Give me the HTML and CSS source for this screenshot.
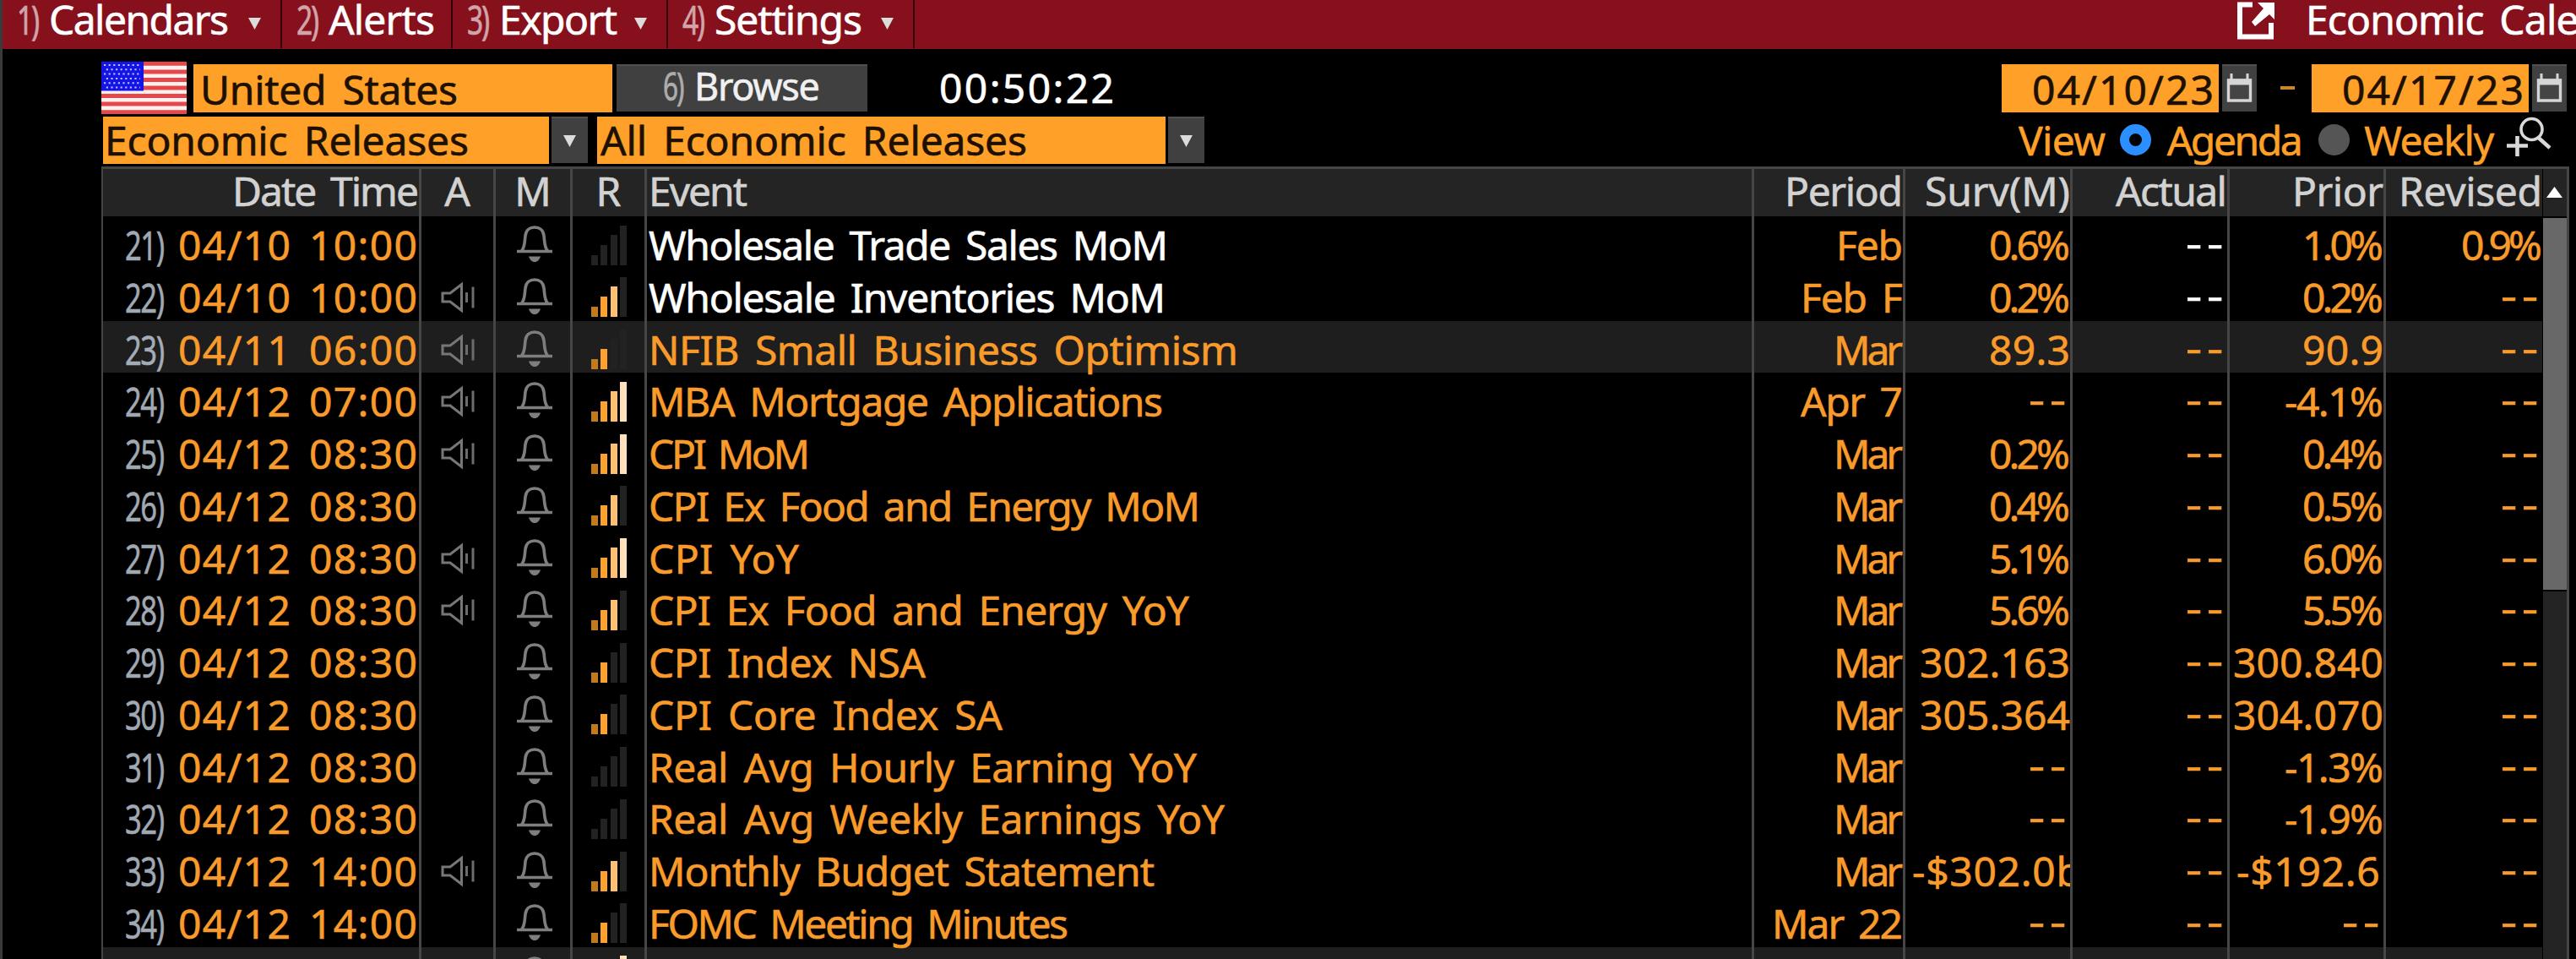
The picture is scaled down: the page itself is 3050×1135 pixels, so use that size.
FILE: index.html
```html
<!DOCTYPE html>
<html lang="en">
<head>
<meta charset="utf-8">
<title>Economic Calendars</title>
<link rel="stylesheet" href="styles.css">
</head>
<body>
<svg class="defs" width="0" height="0" aria-hidden="true">
  <symbol id="bell" viewBox="0 0 44 44"><path d="M1 30.500h42M6.500 30C10.500 26 10 20 11 12C11.800 5 16.500 2 22 2S32.200 5 33 12C34 20 33.500 26 37.500 30" fill="none" stroke="#7e7e7e" stroke-width="3.600"/><path d="M15 36.500h14c-1.500 4-3.500 6.500-7 6.500s-5.500-2.500-7-6.500z" fill="#7e7e7e"/></symbol>
  <symbol id="speaker" viewBox="0 0 40 38"><path d="M2 14v10h9L24.500 34.500V3.500L11 14z" fill="none" stroke="#777" stroke-width="3"/><path d="M30.500 13v12M38 6.500v25" stroke="#6c6c6c" stroke-width="3"/></symbol>
  <symbol id="calendar" viewBox="0 0 31 36"><path d="M6 1v8M25 1v8" stroke="#d5d5d5" stroke-width="3"/><path d="M2.500 9h26v24h-26z" fill="#444" stroke="#d5d5d5" stroke-width="3.400"/><path d="M1 7.500h29v7H1z" fill="#d5d5d5"/></symbol>
</svg>

<header class="toolbar">
  <div class="menu"><span class="key">1)</span><span class="fit" data-w="213">Calendars</span><i class="caret"></i></div>
  <div class="menu alerts"><span class="key">2)</span><span class="fit" data-w="126">Alerts</span></div>
  <div class="menu export"><span class="key">3)</span><span class="fit" data-w="140">Export</span><i class="caret"></i></div>
  <div class="menu settings"><span class="key">4)</span><span class="fit" data-w="175">Settings</span><i class="caret"></i></div>
  <div class="title">
    <svg width="46" height="46" viewBox="0 0 46 46"><path d="M19 3.500H4v38h37V25" fill="none" stroke="#fff" stroke-width="6"/><path d="M25 1h20v20l-6-6-17 14-4-5 14-16z" fill="#fff"/></svg>
    <span class="fit" data-w="448">Economic Calendars</span>
  </div>
</header>

<section class="filters">
  <svg class="flag" width="101" height="62" viewBox="0 0 101 62" preserveAspectRatio="none">
    <path fill="#fff0ee" d="M0 0h101v62H0z"/>
    <path stroke="#e5484b" stroke-width="4.800" d="M0 2.400h101M0 12h101M0 21.500h101M0 31h101M0 40.500h101M0 50h101M0 59.600h101"/>
    <path fill="#1414e6" d="M0 0h50v34.500H0z"/>
    <path stroke="#b9c0ff" stroke-width="2" stroke-dasharray="2.200 3.400" d="M3 4h44M5.800 9.300h40M3 14.600h44M5.800 19.900h40M3 25.200h44M5.800 30.500h40"/>
  </svg>
  <div class="field country"><span class="fit" data-w="305">United States</span></div>
  <div class="button browse"><span class="key">6)</span><span class="fit" data-w="149">Browse</span></div>
  <div class="clock"><span class="fit" data-w="207">00:50:22</span></div>
  <div class="field date"><span class="fit" data-w="215">04/10/23</span></div>
  <div class="button picker"><svg width="31" height="36"><use href="#calendar"/></svg></div>
  <div class="range"></div>
  <div class="field date"><span class="fit" data-w="215">04/17/23</span></div>
  <div class="button picker"><svg width="31" height="36"><use href="#calendar"/></svg></div>
</section>

<section class="filters second">
  <div class="field kind"><span class="fit" data-w="431">Economic Releases</span></div>
  <div class="button drop"><i class="caret"></i></div>
  <div class="field scope"><span class="fit" data-w="505">All Economic Releases</span></div>
  <div class="button drop"><i class="caret"></i></div>
  <div class="view">
    <span class="fit v1" data-w="103">View</span><i class="radio on"></i>
    <span class="fit v2" data-w="161">Agenda</span><i class="radio"></i>
    <span class="fit v3" data-w="154">Weekly</span>
    <svg width="54" height="48" viewBox="0 0 54 48"><circle cx="29.500" cy="15" r="12.500" fill="none" stroke="#d9d9d9" stroke-width="3.600"/><path d="M37.500 25L51 37" stroke="#d9d9d9" stroke-width="4.500"/><path d="M0 34.500h25M12.500 23v24" stroke="#d9d9d9" stroke-width="4.600"/></svg>
  </div>
</section>

<main class="grid">
  <div class="table" id="table">
    <div class="row head">
      <div class="r"><span class="fit" data-w="221">Date Time</span></div>
      <div class="c">A</div><div class="c"><span class="fit" data-w="36">M</span></div><div class="c">R</div>
      <div class="l"><span class="fit" data-w="117">Event</span></div>
      <div class="r"><span class="fit" data-w="140">Period</span></div>
      <div class="r"><span class="fit" data-w="172">Surv(M)</span></div>
      <div class="r"><span class="fit" data-w="132">Actual</span></div>
      <div class="r"><span class="fit" data-w="108">Prior</span></div>
      <div class="r"><span class="fit" data-w="170">Revised</span></div>
    </div>
  </div>
  <div class="scroll"><div class="up"><i></i></div><div class="thumb"></div></div>
</main>
<script src="calendar.js"></script>
</body>
</html>
```
FILE: styles.css
```css
* { box-sizing: border-box; }
body {
  margin: 0; width: 3050px; height: 1135px; overflow: hidden;
  background: #000; border-left: 3px solid #3a3a3a;
  display: flex; flex-direction: column;
  font: 48px/61px "Noto Sans", sans-serif; word-spacing: 7px; white-space: nowrap;
  -webkit-text-stroke: .6px currentColor;
  color: #fff;
}
.defs { position: absolute; }
.fit { display: inline-block; }
.key { display: inline-block; width: 25px; transform: scaleX(.7); transform-origin: left; letter-spacing: -3px; opacity: .62; flex: none; }
.caret { width: 15px; height: 14px; background: #dcdcdc; clip-path: polygon(0 0, 100% 0, 50% 100%); flex: none; }

.toolbar { height: 58px; background: #87101d; display: flex; flex: none; line-height: 45px; }
.menu { display: flex; width: 331px; padding-left: 17px; gap: 13px; border-right: 2px solid #35040a; height: 57px; }
.menu .caret { margin: 21px 23px 0 auto; }
.alerts { width: 202px; }
.export { width: 255px; }
.settings { width: 292px; }
.title { margin-left: auto; width: 402px; display: flex; gap: 36px; overflow: hidden; }
.title svg { margin-top: 2px; flex: none; }

.filters { display: flex; height: 62px; margin: 15px 0 0 117px; flex: none; align-items: center; }
.flag { flex: none; }
.field { background: #ffa028; color: #1d1000; height: 57px; line-height: 60px; flex: none; }
.button { background: #404040; border-top: 2px solid #505050; height: 56px; flex: none; display: flex; color: #f0f0f0; }
.country { width: 496px; margin-left: 8px; padding-left: 8px; }
.browse { width: 297px; margin-left: 5px; padding-left: 55px; gap: 12px; font-size: 45px; line-height: 48px; }
.clock { margin-left: 85px; width: 210px; line-height: 64px; }
.date { width: 257px; text-align: right; padding-right: 6px; }
.clock + .date { margin-left: 1048px; }
.picker { width: 41px; margin-left: 4px; padding: 8px 0 0 5px; }
.range { width: 17px; height: 4px; margin: 0 20px 0 28px; background: #c9842c; }

.second { margin: 0 0 0 119px; height: 61px; align-items: flex-start; padding-top: 3px; }
.second .field { height: 56px; line-height: 56px; padding-left: 2px; }
.second .scope { padding-left: 4px; }
.kind { width: 528px; }
.scope { width: 673px; margin-left: 11px; }
.drop { width: 43px; margin-left: 3px; height: 55px; justify-content: center; padding: 20px 0 0; }
.view { margin-left: 964px; display: flex; color: #ffa028; line-height: 56px; }
.radio { width: 37px; height: 37px; border-radius: 50%; background: #555; margin-top: 9px; flex: none; }
.radio.on { background: #000; border: 11px solid #2c8fff; }
.v1 { width: 119px; }
.v2 { margin-left: 19px; width: 177px; }
.v3 { margin-left: 17px; width: 168px; }
.view svg { flex: none; }

.grid { display: flex; flex: 1; min-height: 0; margin-left: 117px; width: 2922px; border: solid #454545; border-width: 3px 3px 0 2px; margin-top: 1px; }
.table { width: 2888px; flex: none; overflow: hidden; }
.row { display: grid; grid-template-columns: 377px 88px 91px 88px 1311px 179px 198px 186px 185px 185px; height: 61.75px; line-height: 68px; color: #f99b2b; }
.row > div { border-right: 3px solid #464646; overflow-x: clip; }
.row > div:last-child { border: 0; }
.row.head { background: #242424; color: #d2d2d2; height: 56px; line-height: 51px; }
.row.lit { background: #1e1e1e; }
.r { text-align: right; }
.l { padding-left: 2px; }
.c { text-align: center; }
.row:not(.head) > .c { display: flex; justify-content: center; }
.row .over { text-align: left; padding-left: 8px; }
.when { display: flex; padding-left: 26px; }
.when .key { width: 63px; transform: scaleX(.72); letter-spacing: -2px; color: #bcc6d2; opacity: .85; }
.new { color: #fff; }
.none { display: inline-block; letter-spacing: 4.500px; transform: translate(1px, -3px) scaleX(1.25); transform-origin: right; }
.bell { margin: 11px 0 0 3px; }
.speaker { margin-top: 15px; }
.bars { display: flex; align-items: flex-end; gap: 3.700px; height: 47px; margin-top: 10.500px; padding-left: 1px; }
.bars i { width: 7.700px; background: #222; }
.bars i:nth-child(1) { height: 12px; }
.bars i:nth-child(2) { height: 24px; }
.bars i:nth-child(3) { height: 36px; }
.bars i:nth-child(4) { height: 47px; }
.bars i.b1 { background: #c17a20; }
.bars i.b2 { background: #fda12d; }
.bars i.b3 { background: #ffbe70; }
.bars i.b4 { background: #ffe2bb; }

.scroll { margin-left: 1px; flex: 1; background: #242424; }
.up { height: 58px; border-bottom: 2px solid #000; padding: 21px 0 0 4px; }
.up i { display: block; width: 19px; height: 13px; background: #fff; clip-path: polygon(50% 0, 100% 100%, 0 100%); }
.thumb { height: 442px; background: #686868; border-bottom: 2px solid #000; }
```
FILE: calendar.js
```js
// number, date and time, audio, relevance 0-4, event, width, period, survey, actual, prior, revised
const N = '--';
const rows = [
  ['21)', '04/10 10:00', 0, 0, 'Wholesale Trade Sales MoM', 615, 'Feb', '0.6%', N, '1.0%', '0.9%'],
  ['22)', '04/10 10:00', 1, 3, 'Wholesale Inventories MoM', 612, 'Feb F', '0.2%', N, '0.2%', N],
  ['23)', '04/11 06:00', 1, 2, 'NFIB Small Business Optimism', 698, 'Mar', '89.3', N, '90.9', N],
  ['24)', '04/12 07:00', 1, 4, 'MBA Mortgage Applications', 609, 'Apr 7', N, N, '-4.1%', N],
  ['25)', '04/12 08:30', 1, 4, 'CPI MoM', 191, 'Mar', '0.2%', N, '0.4%', N],
  ['26)', '04/12 08:30', 0, 3, 'CPI Ex Food and Energy MoM', 653, 'Mar', '0.4%', N, '0.5%', N],
  ['27)', '04/12 08:30', 1, 4, 'CPI YoY', 178, 'Mar', '5.1%', N, '6.0%', N],
  ['28)', '04/12 08:30', 1, 3, 'CPI Ex Food and Energy YoY', 640, 'Mar', '5.6%', N, '5.5%', N],
  ['29)', '04/12 08:30', 0, 2, 'CPI Index NSA', 328, 'Mar', '302.163', N, '300.840', N],
  ['30)', '04/12 08:30', 0, 2, 'CPI Core Index SA', 419, 'Mar', '305.364', N, '304.070', N],
  ['31)', '04/12 08:30', 0, 0, 'Real Avg Hourly Earning YoY', 649, 'Mar', N, N, '-1.3%', N],
  ['32)', '04/12 08:30', 0, 0, 'Real Avg Weekly Earnings YoY', 682, 'Mar', N, N, '-1.9%', N],
  ['33)', '04/12 14:00', 1, 3, 'Monthly Budget Statement', 599, 'Mar', '-$302.0b', N, '-$192.6b', N],
  ['34)', '04/12 14:00', 0, 2, 'FOMC Meeting Minutes', 497, 'Mar 22', N, N, N, N],
  ['', '', 0, 4, '', 0, '', '', '', '', ''],
];
const widths = { Mar: 82, Feb: 79, 'Feb F': 121, 'Apr 7': 121, 'Mar 22': 155 };
const byLength = { 4: 96, 5: 117, 7: 178, 8: 200 };

const fit = (text, w) => text ? `<span class="fit" data-w="${w}">${text}</span>` : '';
const value = (text, fresh) => {
  const body = text === N ? `<span class="none">${N}</span>` : fit(text, byLength[text.length]);
  return `<div class="r${text.length > 7 ? ' over' : ''}${fresh ? ' new' : ''}">${body}</div>`;
};

document.getElementById('table').insertAdjacentHTML('beforeend', rows.map(
  ([num, when, audio, level, event, w, period, surv, actual, prior, revised], i) => `
  <div class="row${i % 12 === 2 ? ' lit' : ''}">
    <div class="when"><span class="key">${num}</span>${fit(when, 283)}</div>
    <div class="c">${audio ? '<svg class="speaker" width="40" height="38"><use href="#speaker"/></svg>' : ''}</div>
    <div class="c"><svg class="bell" width="44" height="44"><use href="#bell"/></svg></div>
    <div class="c"><div class="bars">${[1, 2, 3, 4].map(n => `<i class="${n <= level ? 'b' + n : ''}"></i>`).join('')}</div></div>
    <div class="l${i < 2 ? ' new' : ''}">${fit(event, w)}</div>
    <div class="r">${fit(period, widths[period])}</div>
    ${value(surv)}${value(actual, i < 2)}${value(prior)}${value(revised)}
  </div>`).join(''));

// Tracks each label so that it fills its set width.
for (const el of document.querySelectorAll('.fit')) {
  const range = document.createRange();
  range.selectNodeContents(el);
  const gap = (el.dataset.w - range.getBoundingClientRect().width) / Math.max(1, el.textContent.length - 1);
  el.style.letterSpacing = gap + 'px';
  el.style.marginRight = -gap + 'px';
}
```
